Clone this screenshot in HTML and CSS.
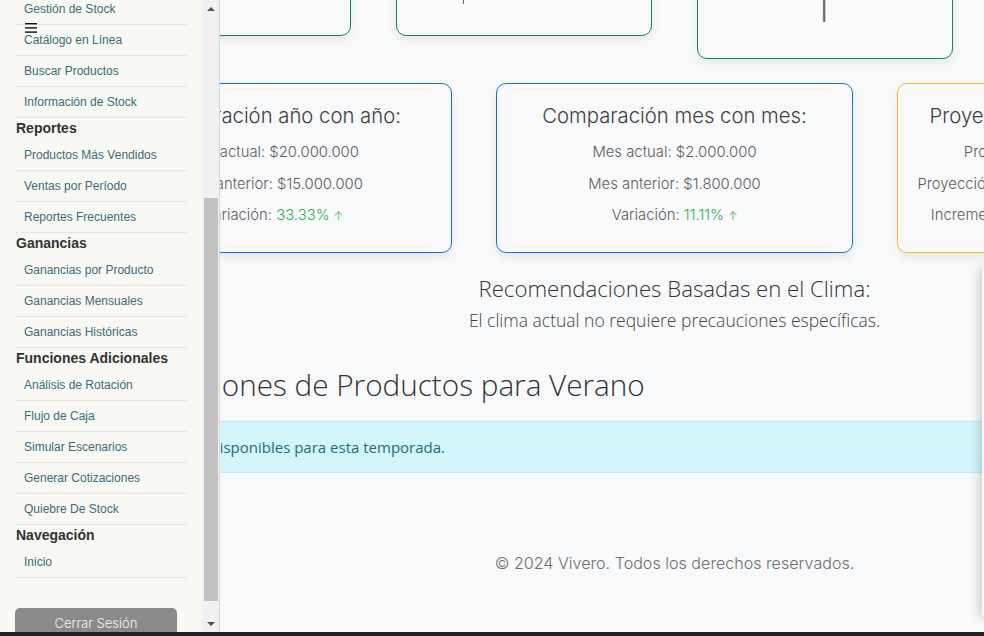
FILE: index.html
```html
<!DOCTYPE html>
<html lang="es">
<head>
<meta charset="utf-8">
<title>Vivero - Panel</title>
<link rel="stylesheet" href="styles.css">
</head>
<body>
<div class="page">
  <div class="app">
    <main class="main">
      <div class="container">
        <div class="row stats">
          <div class="card green short"></div>
          <div class="card green short"><span class="tick"></span></div>
          <div class="card green tall"><div class="big">1</div></div>
          <div class="card green short"></div>
        </div>
        <div class="row compare">
          <div class="card blue">
            <h3 class="card-title">Comparación año con año:</h3>
            <p>Año actual: $20.000.000</p>
            <p>Año anterior: $15.000.000</p>
            <p>Variación: <span class="up">33.33% <span class="arrow">↑</span></span></p>
          </div>
          <div class="card blue">
            <h3 class="card-title">Comparación mes con mes:</h3>
            <p>Mes actual: $2.000.000</p>
            <p>Mes anterior: $1.800.000</p>
            <p>Variación: <span class="up">11.11% <span class="arrow">↑</span></span></p>
          </div>
          <div class="card yellow">
            <h3 class="card-title">Proyección de Ventas Anuales:</h3>
            <p>Promedio de ventas: $1.900.000</p>
            <p>Proyección para el próximo año: $22.000.000</p>
            <p>Incremento esperado sobre el actual: 10%</p>
          </div>
        </div>
        <section class="weather">
          <h3>Recomendaciones Basadas en el Clima:</h3>
          <p>El clima actual no requiere precauciones específicas.</p>
        </section>
        <h2 class="section-title">Recomendaciones de Productos para Verano</h2>
        <div class="alert">No hay productos disponibles para esta temporada.</div>
        <footer class="footer">© 2024 Vivero. Todos los derechos reservados.</footer>
      </div>
    </main>

    <aside class="sidebar">
      <div class="side-content">
        <ul class="nav">
          <li class="item">Gestión de Stock</li>
          <li class="item">Catálogo en Línea</li>
          <li class="item">Buscar Productos</li>
          <li class="item">Información de Stock</li>
          <li class="heading">Reportes</li>
          <li class="item">Productos Más Vendidos</li>
          <li class="item">Ventas por Período</li>
          <li class="item">Reportes Frecuentes</li>
          <li class="heading">Ganancias</li>
          <li class="item">Ganancias por Producto</li>
          <li class="item">Ganancias Mensuales</li>
          <li class="item">Ganancias Históricas</li>
          <li class="heading">Funciones Adicionales</li>
          <li class="item">Análisis de Rotación</li>
          <li class="item">Flujo de Caja</li>
          <li class="item">Simular Escenarios</li>
          <li class="item">Generar Cotizaciones</li>
          <li class="item">Quiebre De Stock</li>
          <li class="heading">Navegación</li>
          <li class="item">Inicio</li>
        </ul>
        <button class="logout">Cerrar Sesión</button>
      </div>
      <div class="scrollbar">
        <div class="sb-btn"><span class="tri-up"></span></div>
        <div class="sb-track"><div class="sb-thumb"></div></div>
        <div class="sb-btn"><span class="tri-down"></span></div>
      </div>
    </aside>

    <button class="toggle" aria-label="Menú">
      <svg width="13" height="10" viewBox="0 0 13 10"><rect x="0" y="0" width="12" height="1.4" fill="#111"/><rect x="0" y="4.2" width="12" height="1.4" fill="#111"/><rect x="0" y="8.4" width="12" height="1.4" fill="#111"/></svg>
    </button>

    <div class="side-panel"></div>
  </div>
  <div class="bottombar"></div>
</div>
</body>
</html>
```

FILE: styles.css
```css
html, body {
  margin: 0;
  padding: 0;
  overflow: hidden;
  background: #f8f9fa;
}
.page {
  width: 984px;
  height: 636px;
  display: flex;
  flex-direction: column;
}
.app {
  position: relative;
  height: 632px;
  overflow: hidden;
  flex: none;
}
.bottombar {
  height: 4px;
  background: #222;
  flex: none;
}

/* main */
.main {
  background: #f8f9fa;
  height: 100%;
}
.container {
  margin-top: -100px;
  margin-left: 40px;
  width: 1269px;
  font-family: Inter, "Liberation Sans", sans-serif;
}
.row {
  display: flex;
  justify-content: center;
  align-items: flex-start;
}
.stats { gap: 45px; }
.compare { gap: 44px; margin-top: 24px; }
.card {
  box-sizing: border-box;
  background: #f8f9fa;
  border: 1px solid;
  border-radius: 10px;
  box-shadow: 0 4px 10px rgba(0,0,0,0.08);
  flex: none;
  text-align: center;
}
.green { border-color: #198754; width: 256px; }
.short { height: 136px; }
.tall { height: 159px; }
.big {
  font-family: "Open Sans", sans-serif;
  font-weight: 300;
  font-size: 44px;
  line-height: 46px;
  color: #666;
  padding-top: 81px;
  padding-right: 4px;
}
.tick {
  display: block;
  width: 1px;
  height: 9px;
  margin: 94px 0 0 66px;
  background: #666;
}
.blue { border-color: #0d6efd; width: 357px; height: 170px; padding: 20px 6px 0; }
.yellow { border-color: #ffc107; width: 357px; height: 170px; padding: 20px 6px 0; }
.card-title {
  margin: 0 0 15px;
  font-size: 20.3px;
  line-height: 23px;
  font-weight: 300;
  color: #404040;
  white-space: nowrap;
}
.card p {
  margin: 0 0 11.5px;
  font-size: 14.85px;
  line-height: 20px;
  font-weight: 300;
  color: #5e5e5e;
  white-space: nowrap;
}
.up { color: #2fb24c; }
.arrow { font-size: 11px; }

.weather {
  margin-top: 24px;
  text-align: center;
  font-family: "Open Sans", sans-serif;
  font-weight: 300;
}
.weather h3 {
  margin: 0;
  font-size: 22.2px;
  line-height: 24px;
  font-weight: 300;
  color: #333;
}
.weather p {
  margin: 8px 0 0;
  font-size: 17.5px;
  line-height: 22px;
  color: #444;
}
.section-title {
  margin: 36px 0 0 2px;
  font-family: "Open Sans", sans-serif;
  font-weight: 300;
  font-size: 29.7px;
  line-height: 36px;
  color: #333;
  white-space: nowrap;
}
.alert {
  margin-top: 18px;
  box-sizing: border-box;
  height: 52px;
  padding: 15px 16px 15px 41px;
  background: #d3f5fc;
  border: 1px solid #b9ecf5;
  color: #2a6a80;
  font-family: "Open Sans", sans-serif;
  font-size: 15px;
  line-height: 20px;
}
.footer {
  margin-top: 78px;
  text-align: center;
  font-size: 16.1px;
  line-height: 24px;
  font-weight: 300;
  color: #6f6f6f;
}

/* sidebar */
.sidebar {
  position: absolute;
  left: 0;
  top: 0;
  bottom: 0;
  width: 220px;
  display: flex;
  border-right: 1px solid #d6d6d6;
  box-sizing: border-box;
  font-family: "Liberation Sans", Arial, sans-serif;
}
.side-content {
  width: 202px;
  background: #f8f9f2;
  overflow: hidden;
}
.nav {
  list-style: none;
  margin: -6px 0 0;
  padding: 0 15px;
}
.item {
  height: 30px;
  line-height: 30px;
  padding-left: 9px;
  border-bottom: 1px solid #e6e6e6;
  font-size: 12px;
  color: #3a6c7b;
  white-space: nowrap;
}
.heading {
  height: 22px;
  line-height: 20px;
  padding-left: 1px;
  font-size: 14px;
  font-weight: bold;
  color: #333;
  white-space: nowrap;
}
.logout {
  display: block;
  margin: 30px 0 0 15px;
  width: 162px;
  height: 30px;
  border: none;
  border-radius: 5px;
  background: #8a8a8a;
  color: #f4f4f4;
  font-family: Inter, "Liberation Sans", sans-serif;
  font-size: 13px;
  font-weight: 300;
  padding: 0;
}
.scrollbar {
  width: 17px;
  background: #f1f1f1;
  display: flex;
  flex-direction: column;
}
.sb-btn {
  height: 17px;
  display: flex;
  align-items: center;
  justify-content: center;
  flex: none;
}
.tri-up {
  width: 0; height: 0;
  border-left: 4px solid transparent;
  border-right: 4px solid transparent;
  border-bottom: 4px solid #505050;
}
.tri-down {
  width: 0; height: 0;
  border-left: 4px solid transparent;
  border-right: 4px solid transparent;
  border-top: 4px solid #505050;
}
.sb-track {
  flex: 1;
  padding-top: 181px;
}
.sb-thumb {
  height: 403px;
  margin: 0 1px 0 2px;
  background: #c1c1c1;
}

.toggle {
  position: absolute;
  left: 25px;
  top: 23px;
  padding: 0;
  border: none;
  background: transparent;
  width: 13px;
  height: 10px;
  line-height: 0;
}
.side-panel {
  position: absolute;
  left: 982px;
  top: 268px;
  width: 300px;
  height: 348px;
  background: #f8f9fa;
  box-shadow: -3px 0 10px rgba(0,0,0,0.18);
}
```
